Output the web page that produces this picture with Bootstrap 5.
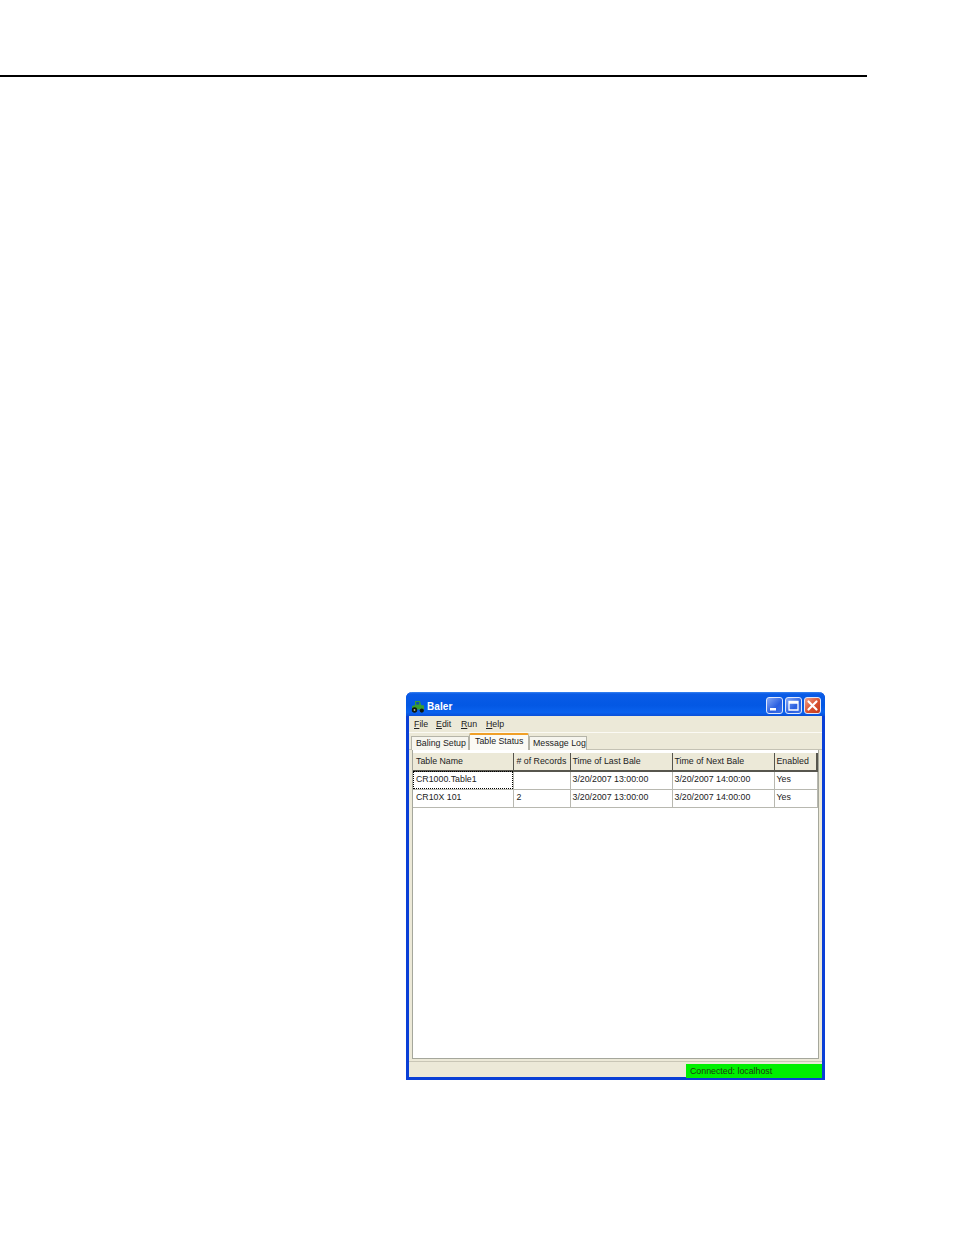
<!DOCTYPE html>
<html lang="en">
<head>
<meta charset="utf-8">
<title>Baler</title>
<link href="https://cdn.jsdelivr.net/npm/bootstrap@5.3.0/dist/css/bootstrap.min.css" rel="stylesheet">
<style>
html,body{background:#fff;margin:0;height:1235px;overflow:hidden}
body{font-family:"Liberation Sans",Arial,sans-serif;font-size:8.8px;line-height:1;color:#222}
.page-rule{margin:75px 0 0;width:867px;height:2px;background:#000;border:0;opacity:1}
.xp-win{margin:615px 0 0 406px;width:419px;height:388px;background:#ece9d8;border:solid #0a3fd6;border-width:0 3px 3px 3px;border-radius:6px 6px 0 0}
.xp-title{height:24px;margin:0 -3px;padding:4px 4px 0 5px;border-radius:6px 6px 0 0;background:linear-gradient(180deg,#3a86f2 0,#0a5be6 8%,#0358e4 55%,#0a62ee 85%,#0a50d8 100%);color:#fff;font-size:10px;font-weight:700}
.xp-title svg{display:block;flex:none}
.xp-title-text{margin:2px 0 0 3px;letter-spacing:.1px}
.xp-btn{width:17px;height:17px;border:1px solid #dfe8fb;border-radius:3px;background:linear-gradient(135deg,#86a9f6,#2a5fe0 60%,#3f73ea)}
.xp-btn.is-close{background:linear-gradient(135deg,#f0a08a,#d9512f 55%,#c23a1e)}
.xp-btns{gap:2px;margin-top:-2px}
.xp-menu{height:17px;padding-left:5px;border-bottom:1px solid #fbfaf4}
.xp-menu span{width:25px}
.xp-menu span:first-child{width:22px}
.xp-menu span::first-letter{text-decoration:underline}
.xp-tabs{height:17px;padding:0 0 0 2px;border-bottom:1px solid #c4c2b4;align-items:flex-end}
.xp-tab{width:58px;height:14px;padding:2px 0 0 4px;background:#f6f5ee;border:1px solid #b5b4a8;border-bottom:0;color:#222;white-space:nowrap}
.xp-tab:last-child{padding-left:3px}
.xp-tab.is-active{width:60px;height:17px;padding:2px 0 0 5px;background:#fbfaf5;border-top:2px solid #f0a028;border-radius:2px 2px 0 0}
.xp-panel{height:309px;margin:0 0 0 3px;width:407px;background:#fff;border:1px solid #a5a79c;border-top:0;padding-top:3px}
.xp-table{width:404px;table-layout:fixed;margin:0;border-collapse:collapse;--bs-table-bg:transparent}
.xp-table>:not(caption)>*>*{padding:0 0 0 3px;height:18px;line-height:15px;vertical-align:top;border:0;border-right:1px solid #b8b8b0;border-bottom:1px solid #b8b8b0;color:#222;white-space:nowrap;overflow:hidden;font-weight:400;box-shadow:none}
.xp-table>:not(caption)>*>*:nth-child(n+3){padding-left:2px}
.xp-table>thead>tr>th{line-height:17px;background:#ece9d8;border-bottom:2px solid #57564e;border-right:1px solid #57564e}
.xp-table>thead>tr>th:last-child{border-right:2px solid #57564e}
.xp-table th:nth-child(1){width:100px}
.xp-table th:nth-child(2){width:57px}
.xp-table th:nth-child(3),.xp-table th:nth-child(4){width:102px}
.xp-table th:nth-child(5){width:43px}
.xp-focus{outline:1px dotted #000;outline-offset:-1px}
.xp-status{height:17px;margin-top:2px;border-top:1px solid #c9c6b6}
.xp-status-fill{width:277px}
.xp-status-green{width:136px;margin-top:2px;background:#00f000;padding:3px 0 0 4px;color:#1a3a10}
</style>
</head>
<body>
<hr class="page-rule">
<div class="xp-win">
  <div class="xp-title d-flex align-items-center">
    <svg width="13" height="13" viewBox="0 0 13 13" aria-hidden="true">
      <path d="M1 6 L4 5 L4 1 L9 1 L10 5 L13 5.5 L13 9.5 L1 9.5 Z" fill="#3aa030"/>
      <rect x="5.2" y="2" width="3" height="2.6" fill="#0e4fb0"/>
      <circle cx="3.5" cy="10" r="2.7" fill="#10180c"/>
      <circle cx="3.5" cy="10" r=".9" fill="#b9c08a"/>
      <circle cx="10.8" cy="10.6" r="2.1" fill="#10180c"/>
    </svg>
    <span class="xp-title-text flex-grow-1">Baler</span>
    <div class="xp-btns d-flex">
      <div class="xp-btn d-flex"><svg width="15" height="15" viewBox="0 0 15 15"><rect x="3" y="10" width="6" height="2.5" fill="#fff"/></svg></div>
      <div class="xp-btn d-flex"><svg width="15" height="15" viewBox="0 0 15 15"><path d="M3 3.5h9v8.5h-9z M3 5h9" fill="none" stroke="#fff" stroke-width="1.3"/></svg></div>
      <div class="xp-btn is-close d-flex"><svg width="15" height="15" viewBox="0 0 15 15"><path d="M3.5 3.5 L11.5 11.5 M11.5 3.5 L3.5 11.5" stroke="#fff" stroke-width="2.2" stroke-linecap="round"/></svg></div>
    </div>
  </div>
  <div class="xp-menu d-flex align-items-center">
    <span>File</span><span>Edit</span><span>Run</span><span>Help</span>
  </div>
  <ul class="nav xp-tabs">
    <li class="nav-item xp-tab">Baling Setup</li>
    <li class="nav-item xp-tab is-active">Table Status</li>
    <li class="nav-item xp-tab">Message Log</li>
  </ul>
  <div class="xp-panel">
    <table class="table xp-table">
      <thead><tr><th>Table Name</th><th>&#35; of Records</th><th>Time of Last Bale</th><th>Time of Next Bale</th><th>Enabled</th></tr></thead>
      <tbody>
        <tr><td class="xp-focus">CR1000.Table1</td><td></td><td>3/20/2007 13:00:00</td><td>3/20/2007 14:00:00</td><td>Yes</td></tr>
        <tr><td>CR10X 101</td><td><span class="xp-cell">2</span></td><td>3/20/2007 13:00:00</td><td>3/20/2007 14:00:00</td><td>Yes</td></tr>
      </tbody>
    </table>
  </div>
  <div class="xp-status d-flex">
    <div class="xp-status-fill"></div>
    <div class="xp-status-green">Connected: localhost</div>
  </div>
</div>
<script src="https://cdn.jsdelivr.net/npm/bootstrap@5.3.0/dist/js/bootstrap.bundle.min.js"></script>
</body>
</html>
